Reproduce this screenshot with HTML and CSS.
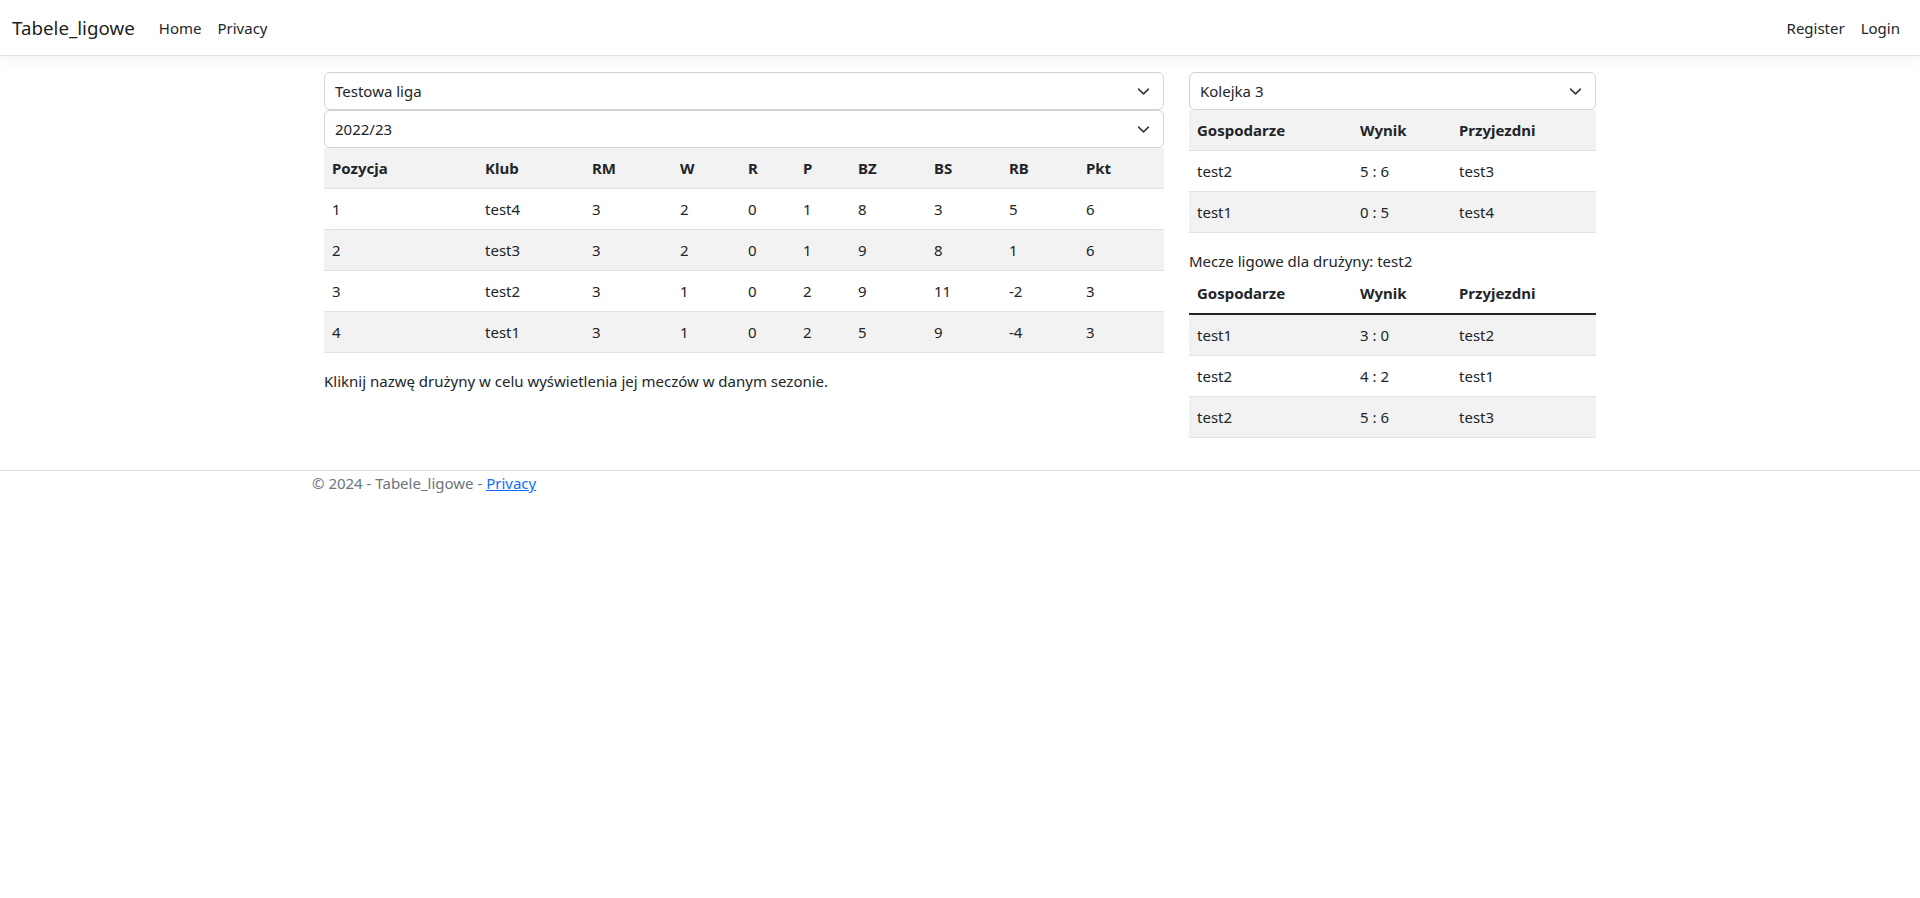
FILE: index.html
```html
<!DOCTYPE html>
<html lang="pl">
<head>
<meta charset="utf-8">
<title>Tabele_ligowe</title>
<link rel="stylesheet" href="styles.css">
</head>
<body>
<header class="navbar">
  <div class="nav-left">
    <a class="brand" href="#">Tabele_ligowe</a>
    <a class="nav-link" href="#">Home</a>
    <a class="nav-link" href="#">Privacy</a>
  </div>
  <div class="nav-right">
    <a class="nav-link" href="#">Register</a>
    <a class="nav-link" href="#">Login</a>
  </div>
</header>

<main class="main">
  <section class="col-left">
    <div class="select"><span>Testowa liga</span><svg class="chev" viewBox="0 0 16 16" width="13" height="13"><path d="m2 5 6 6 6-6" fill="none" stroke="#343a40" stroke-width="2" stroke-linecap="round" stroke-linejoin="round"/></svg></div>
    <div class="select"><span>2022/23</span><svg class="chev" viewBox="0 0 16 16" width="13" height="13"><path d="m2 5 6 6 6-6" fill="none" stroke="#343a40" stroke-width="2" stroke-linecap="round" stroke-linejoin="round"/></svg></div>
    <table class="table striped league">
      <colgroup>
        <col class="c1"><col class="c2"><col class="c3"><col class="c4"><col class="c5"><col class="c6"><col class="c7"><col class="c8"><col class="c9"><col class="c10">
      </colgroup>
      <tbody>
        <tr class="head"><td>Pozycja</td><td>Klub</td><td>RM</td><td>W</td><td>R</td><td>P</td><td>BZ</td><td>BS</td><td>RB</td><td>Pkt</td></tr>
        <tr><td>1</td><td>test4</td><td>3</td><td>2</td><td>0</td><td>1</td><td>8</td><td>3</td><td>5</td><td>6</td></tr>
        <tr><td>2</td><td>test3</td><td>3</td><td>2</td><td>0</td><td>1</td><td>9</td><td>8</td><td>1</td><td>6</td></tr>
        <tr><td>3</td><td>test2</td><td>3</td><td>1</td><td>0</td><td>2</td><td>9</td><td>11</td><td>-2</td><td>3</td></tr>
        <tr><td>4</td><td>test1</td><td>3</td><td>1</td><td>0</td><td>2</td><td>5</td><td>9</td><td>-4</td><td>3</td></tr>
      </tbody>
    </table>
    <p class="hint">Kliknij nazwę drużyny w celu wyświetlenia jej meczów w danym sezonie.</p>
  </section>

  <section class="col-right">
    <div class="select"><span>Kolejka 3</span><svg class="chev" viewBox="0 0 16 16" width="13" height="13"><path d="m2 5 6 6 6-6" fill="none" stroke="#343a40" stroke-width="2" stroke-linecap="round" stroke-linejoin="round"/></svg></div>
    <table class="table striped matches">
      <colgroup><col class="m1"><col class="m2"><col class="m3"></colgroup>
      <tbody>
        <tr class="head"><td>Gospodarze</td><td>Wynik</td><td>Przyjezdni</td></tr>
        <tr><td>test2</td><td>5 : 6</td><td>test3</td></tr>
        <tr><td>test1</td><td>0 : 5</td><td>test4</td></tr>
      </tbody>
    </table>
    <p class="team-label">Mecze ligowe dla drużyny: test2</p>
    <table class="table striped matches team">
      <colgroup><col class="m1"><col class="m2"><col class="m3"></colgroup>
      <thead>
        <tr class="head plain"><th>Gospodarze</th><th>Wynik</th><th>Przyjezdni</th></tr>
      </thead>
      <tbody>
        <tr><td>test1</td><td>3 : 0</td><td>test2</td></tr>
        <tr><td>test2</td><td>4 : 2</td><td>test1</td></tr>
        <tr><td>test2</td><td>5 : 6</td><td>test3</td></tr>
      </tbody>
    </table>
  </section>
</main>

<footer class="footer">
  <div class="footer-inner">© 2024 - Tabele_ligowe - <a href="#" class="footer-link">Privacy</a></div>
</footer>
</body>
</html>
```

FILE: styles.css
```css
* { box-sizing: border-box; }

html, body {
  margin: 0;
  padding: 0;
}

body {
  font-family: "Noto Sans", "Open Sans", sans-serif;
  font-size: 15px;
  line-height: 24px;
  color: #212529;
  background: #fff;
}

a { text-decoration: none; }

/* navbar */
.navbar {
  height: 56px;
  display: flex;
  align-items: center;
  justify-content: space-between;
  padding: 0 12px;
  border-bottom: 1px solid #dee2e6;
  box-shadow: 0 4px 12px rgba(0, 0, 0, 0.05);
  margin-bottom: 16px;
}

.nav-left, .nav-right {
  display: flex;
  align-items: center;
}

.brand {
  font-size: 18.75px;
  line-height: 30px;
  padding: 5px 0;
  margin-right: 16px;
  color: rgba(0, 0, 0, 0.9);
}

.nav-link {
  padding: 8px;
  color: #212529;
}

/* main */
.main {
  width: 1272px;
  margin: 0 auto;
  padding-bottom: 16px;
  display: flex;
  gap: 25px;
  align-items: flex-start;
}

.col-left { width: 840px; flex: none; }
.col-right { width: 407px; flex: none; }

.select {
  height: 38px;
  border: 1px solid #ced4da;
  border-radius: 6px;
  padding: 0 13px 0 10px;
  display: flex;
  align-items: center;
  justify-content: space-between;
  color: #212529;
  background: #fff;
}

.chev { flex: none; }

.table {
  width: 100%;
  border-collapse: collapse;
  table-layout: fixed;
  margin-bottom: 16px;
}

.table td, .table th {
  padding: 8px;
  line-height: 24px;
  border-bottom: 1px solid #dee2e6;
  text-align: left;
  white-space: nowrap;
}

.table .head td, .table .head th {
  font-weight: 700;
}

.striped tbody tr:nth-of-type(odd) > * {
  background: #f2f2f2;
}

.team thead th {
  border-bottom: 2px solid #212529;
  background: #fff;
}

.league .c1 { width: 153px; }
.league .c2 { width: 107px; }
.league .c3 { width: 88px; }
.league .c4 { width: 68px; }
.league .c5 { width: 55px; }
.league .c6 { width: 55px; }
.league .c7 { width: 76px; }
.league .c8 { width: 75px; }
.league .c9 { width: 77px; }
.league .c10 { width: auto; }

.matches .m1 { width: 163px; }
.matches .m2 { width: 99px; }
.matches .m3 { width: auto; }

.hint {
  margin: 0 0 16px;
}

.team-label {
  margin: 0;
}

/* footer */
.footer {
  border-top: 1px solid #dee2e6;
  color: #6c757d;
}

.footer-inner {
  width: 1296px;
  margin: 0 auto;
  line-height: 24px;
}

.footer-link {
  color: #0d6efd;
  text-decoration: underline;
}
```
